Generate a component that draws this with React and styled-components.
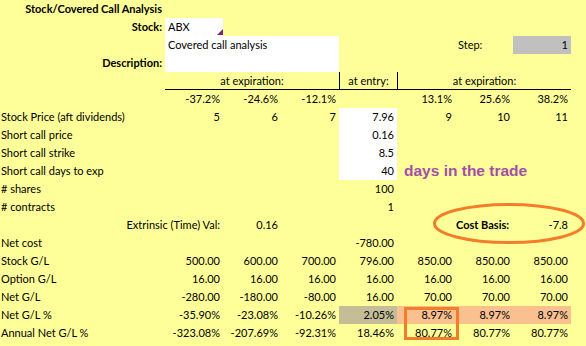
import React from "react";
import styled, { createGlobalStyle } from "styled-components";

const Global = createGlobalStyle`
  html, body { margin: 0; padding: 0; background: #ffff99; }
  body { width: 586px; height: 346px; overflow: hidden; }
`;

const Sheet = styled.div`
  position: relative;
  width: 586px;
  height: 346px;
  background: #ffff99;
  color: #000;
  font-family: Lato, "Liberation Sans", sans-serif;
  font-size: 11px;
`;

const Row = styled.div`
  display: grid;
  grid-template-columns: 165px repeat(7, 58px);
  height: 18px;
`;

const Cell = styled.div`
  grid-column: ${(p) => `${p.$col} / span ${p.$span || 1}`};
  grid-row: 1;
  box-sizing: border-box;
  height: 18px;
  line-height: 18px;
  padding: 0 ${(p) => (p.$pad != null ? p.$pad : 3)}px;
  text-align: ${(p) => p.$align || "right"};
  font-weight: ${(p) => (p.$bold ? 700 : 400)};
  background: ${(p) => p.$bg || "transparent"};
  white-space: nowrap;
  overflow: visible;
`;

const HeadCell = styled(Cell)`
  text-align: center;
  border-bottom: 1px solid #000;
  border-left: ${(p) => (p.$divider ? "1px solid #000" : "none")};
  line-height: 17px;
`;

const DescCell = styled(Cell)`
  text-align: left;
  background: #fff;
`;

const Callout = styled.div`
  grid-column: 6 / span 3;
  grid-row: 1;
  height: 18px;
  line-height: 18px;
  padding-left: 7px;
  font-family: "Liberation Sans", Arial, sans-serif;
  font-weight: 700;
  font-size: 15.5px;
  color: #a24fa6;
  white-space: nowrap;
`;

const Ring = styled.svg`
  position: absolute;
  left: 433px;
  top: 203px;
  overflow: visible;
`;

const Box = styled.div`
  position: absolute;
  left: 404px;
  top: 307px;
  width: 55px;
  height: 33px;
  box-sizing: border-box;
  border: 3px solid #f47d2c;
`;

const Marker = styled.svg`
  position: absolute;
  left: 217px;
  top: 29px;
`;

const WHITE = "#ffffff";
const TAN = "#c4bd97";
const PEACH = "#fac090";
const GRAY = "#c0c0c0";

const numRows = [
  ["Stock G/L", ["500.00", "600.00", "700.00", "796.00", "850.00", "850.00", "850.00"]],
  ["Option G/L", ["16.00", "16.00", "16.00", "16.00", "16.00", "16.00", "16.00"]],
  ["Net G/L", ["-280.00", "-180.00", "-80.00", "16.00", "70.00", "70.00", "70.00"]],
  [
    "Net G/L %",
    ["-35.90%", "-23.08%", "-10.26%", "2.05%", "8.97%", "8.97%", "8.97%"],
    [null, null, null, TAN, PEACH, PEACH, PEACH],
  ],
  ["Annual Net G/L %", ["-323.08%", "-207.69%", "-92.31%", "18.46%", "80.77%", "80.77%", "80.77%"]],
];

const inputRows = [
  ["Short call price", "0.16", WHITE],
  ["Short call strike", "8.5", WHITE],
  ["Short call days to exp", "40", WHITE, true],
  ["# shares", "100"],
  ["# contracts", "1"],
];

export default function App() {
  return (
    <Sheet>
      <Global />
      <Row>
        <Cell $col={1} $bold>Stock/Covered Call Analysis</Cell>
      </Row>
      <Row>
        <Cell $col={1} $bold>Stock:</Cell>
        <Cell $col={2} $align="left" $bg={WHITE}>ABX</Cell>
      </Row>
      <Row>
        <DescCell $col={2} $span={3}>Covered call analysis</DescCell>
        <Cell $col={7} $align="left">Step:</Cell>
        <Cell $col={8} $bg={GRAY}>1</Cell>
      </Row>
      <Row>
        <Cell $col={1} $bold>Description:</Cell>
        <DescCell $col={2} $span={3} />
      </Row>
      <Row>
        <HeadCell $col={2} $span={3}>at expiration:</HeadCell>
        <HeadCell $col={5} $divider>at entry:</HeadCell>
        <HeadCell $col={6} $span={3} $divider>at expiration:</HeadCell>
      </Row>
      <Row>
        <Cell $col={2}>-37.2%</Cell>
        <Cell $col={3}>-24.6%</Cell>
        <Cell $col={4}>-12.1%</Cell>
        <Cell $col={6}>13.1%</Cell>
        <Cell $col={7}>25.6%</Cell>
        <Cell $col={8}>38.2%</Cell>
      </Row>
      <Row>
        <Cell $col={1} $align="left" $pad={1}>Stock Price (aft dividends)</Cell>
        <Cell $col={2}>5</Cell>
        <Cell $col={3}>6</Cell>
        <Cell $col={4}>7</Cell>
        <Cell $col={5} $bg={WHITE}>7.96</Cell>
        <Cell $col={6}>9</Cell>
        <Cell $col={7}>10</Cell>
        <Cell $col={8}>11</Cell>
      </Row>
      {inputRows.map(([label, val, bg, note]) => (
        <Row key={label}>
          <Cell $col={1} $align="left" $pad={1}>{label}</Cell>
          <Cell $col={5} $bg={bg}>{val}</Cell>
          {note && <Callout>days in the trade</Callout>}
        </Row>
      ))}
      <Row>
        <Cell $col={1} $span={2}>Extrinsic (Time) Val:</Cell>
        <Cell $col={3}>0.16</Cell>
        <Cell $col={7} $align="left" $pad={1} $bold>Cost Basis:</Cell>
        <Cell $col={8}>-7.8</Cell>
      </Row>
      <Row>
        <Cell $col={1} $align="left" $pad={1}>Net cost</Cell>
        <Cell $col={5}>-780.00</Cell>
      </Row>
      {numRows.map(([label, vals, bgs]) => (
        <Row key={label}>
          <Cell $col={1} $align="left" $pad={1}>{label}</Cell>
          {vals.map((v, i) => (
            <Cell key={i} $col={i + 2} $bg={bgs ? bgs[i] : undefined}>{v}</Cell>
          ))}
        </Row>
      ))}
      <Marker width="6" height="6" viewBox="0 0 6 6">
        <polygon points="0,6 6,0 6,6" fill="#7b2181" />
      </Marker>
      <Ring width="152" height="41" viewBox="0 0 152 41">
        <ellipse cx="76" cy="20.5" rx="74.5" ry="19" fill="none" stroke="#f47d2c" strokeWidth="3" />
      </Ring>
      <Box />
    </Sheet>
  );
}
